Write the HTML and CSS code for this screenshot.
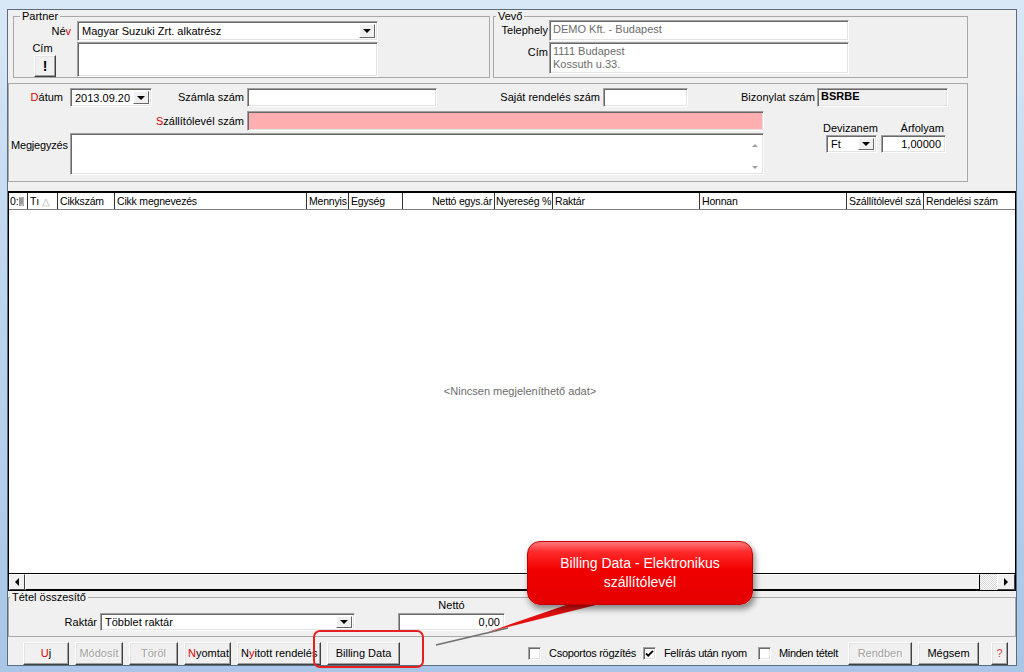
FILE: index.html
```html
<!DOCTYPE html>
<html lang="hu">
<head>
  <meta charset="UTF-8" />
  <title>Szállítólevél</title>
  <link rel="stylesheet" href="styles.css">
</head>
<body>
  <div class="window">
    <div class="client">

      <!-- Partner / Vevő -->
      <div class="top">
        <fieldset class="group partner">
          <legend>Partner</legend>
          <div class="pair-grid">
            <span class="lbl">Né<em>v</em></span>
            <div class="combo"><span class="val">Magyar Suzuki Zrt. alkatrész</span><span class="drop"></span></div>
            <div class="lbl-stack">
              <span class="lbl">Cím</span>
              <button class="btn bang">!</button>
            </div>
            <div class="edit"></div>
          </div>
        </fieldset>

        <fieldset class="group vevo">
          <legend>Vevő</legend>
          <div class="pair-grid">
            <span class="lbl">Telephely</span>
            <div class="edit ro">DEMO Kft. - Budapest</div>
            <span class="lbl lbl-top">Cím</span>
            <div class="edit ro multi">1111 Budapest<br>Kossuth u.33.</div>
          </div>
        </fieldset>
      </div>

      <!-- Bizonylat adatok -->
      <div class="group doc">
        <div class="row row1">
          <span class="lbl w-datum"><em>D</em>átum</span>
          <div class="combo w-date"><span class="val">2013.09.20</span><span class="drop"></span></div>
          <span class="lbl w-szamla">Számla szám</span>
          <div class="edit w-szamla-in"></div>
          <span class="lbl w-sajat">Saját rendelés szám</span>
          <div class="edit w-sajat-in"></div>
          <span class="lbl w-biz">Bizonylat szám</span>
          <div class="edit disabled w-biz-in">BSRBE</div>
        </div>

        <div class="lower">
          <div class="lower-left">
            <div class="row row2">
              <span class="lbl w-szall"><em>S</em>zállítólevél szám</span>
              <div class="edit required w-szall-in"></div>
            </div>
            <div class="row row3">
              <span class="lbl-left">Megjegyzés</span>
              <div class="edit memo">
                <span class="memo-arrows"><i class="tri-up"></i><i class="tri-down"></i></span>
              </div>
            </div>
          </div>

          <div class="currency">
            <span class="cur-lbl">Devizanem</span>
            <span class="cur-lbl right">Árfolyam</span>
            <div class="combo"><span class="val">Ft</span><span class="drop"></span></div>
            <div class="edit num">1,00000</div>
          </div>
        </div>
      </div>

      <!-- Tételek -->
      <div class="grid">
        <div class="grid-head">
          <div class="col c0">0:<svg width="5" height="9" viewBox="0 0 5 9"><path d="M0 0h5v9H0z M1 1v7 M3 1v7 M1 2h3 M1 4h3 M1 6h3" fill="none" stroke="#777" stroke-width="1"/></svg></div>
          <div class="col c1">Tı <span class="sort">△</span></div>
          <div class="col c2">Cikkszám</div>
          <div class="col c3">Cikk megnevezés</div>
          <div class="col c4">Mennyis</div>
          <div class="col c5">Egység</div>
          <div class="col c6 right">Nettó egys.ár</div>
          <div class="col c7">Nyereség %</div>
          <div class="col c8">Raktár</div>
          <div class="col c9">Honnan</div>
          <div class="col c10">Szállítólevél szá</div>
          <div class="col c11">Rendelési szám</div>
        </div>
        <div class="grid-body">
          <span class="empty">&lt;Nincsen megjeleníthető adat&gt;</span>
        </div>
        <div class="hscroll">
          <span class="sb-btn"><i class="tri-left"></i></span>
          <span class="sb-thumb"></span>
          <span class="sb-track"></span>
          <span class="sb-btn"><i class="tri-right"></i></span>
        </div>
      </div>

      <!-- Összesítő -->
      <fieldset class="group summary">
        <legend>Tétel összesítő</legend>
        <div class="sum-row">
          <span class="lbl w-raktar">Raktár</span>
          <div class="combo w-raktar-in"><span class="val">Többlet raktár</span><span class="drop"></span></div>
          <div class="netto">
            <span class="netto-lbl">Nettó</span>
            <div class="edit num">0,00</div>
          </div>
        </div>
      </fieldset>

      <!-- Gombok -->
      <div class="btn-row">
        <div class="btn-group">
          <button class="btn w-uj"><em>U</em>j</button>
          <button class="btn off w-mod">Módosít</button>
          <button class="btn off w-torol">Töröl</button>
          <button class="btn w-nyomtat"><em>N</em>yomtat</button>
          <button class="btn w-nyitott">N<em>y</em>itott rendelés</button>
          <button class="btn w-billing">Billing Data</button>
        </div>
        <div class="btn-group right">
          <label class="check c-csop"><span class="box"></span>Csoportos rögzítés</label>
          <label class="check c-feliras"><span class="box"><svg width="9" height="9" viewBox="0 0 9 9"><path d="M1 4.5l2.2 2.2L8 1.8" fill="none" stroke="#000" stroke-width="1.8"/></svg></span>Felírás után nyom</label>
          <label class="check c-minden"><span class="box"></span>Minden tételt</label>
          <button class="btn off w-rendben">Rendben</button>
          <button class="btn w-megsem">Mégsem</button>
          <button class="btn help">?</button>
        </div>
      </div>
    </div>

    <!-- Kiemelés -->
    <div class="highlight"></div>
    <svg class="tail" width="1024" height="672" viewBox="0 0 1024 672">
      <line x1="436" y1="645" x2="508" y2="628" stroke="#6f6f6f" stroke-width="1.4"/>
      <polygon points="488,632 572,603 604,603" fill="#e51010"/>
    </svg>
    <div class="callout">Billing Data - Elektronikus<br>szállítólevél</div>
  </div>
</body>
</html>
```

FILE: styles.css
```css
:root {
  --face: #f0f0f0;
  --key: #e00000;
  --group: #a8a8a8;
}

* {
  box-sizing: border-box;
}

body {
  margin: 0;
  font-family: "Liberation Sans", Arial, sans-serif;
  font-size: 11px;
  line-height: 13px;
  color: #000;
}

em {
  font-style: normal;
  color: var(--key);
}

/* ----------- WINDOW FRAME ----------- */
.window {
  position: relative;
  width: 1024px;
  height: 672px;
  padding: 9px 7px 6px 7px;
  background: linear-gradient(180deg, #d9e8f7 0%, #bcd4ee 45%, #a9c6e7 100%);
  overflow: hidden;
}

.client {
  height: 100%;
  background: var(--face);
  border: 1px solid #5d6d80;
  display: flex;
  flex-direction: column;
}

/* ----------- COMMON CONTROLS ----------- */
.group {
  margin: 0;
  padding: 0;
  min-width: 0;
  border: 1px solid var(--group);
}

legend {
  padding: 0 2px;
  line-height: 13px;
}

.lbl {
  text-align: right;
  padding-right: 3px;
  white-space: nowrap;
  align-self: center;
}

.edit {
  background: #fff;
  border: 1px solid;
  border-color: #a0a0a0 #fff #fff #a0a0a0;
  box-shadow: inset 1px 1px 0 #696969, inset -1px -1px 0 #e3e3e3;
  padding: 2px 3px;
  white-space: nowrap;
  overflow: hidden;
}

.edit.ro {
  color: #6d6d6d;
}

.edit.disabled {
  background: var(--face);
  font-weight: bold;
  padding-top: 1px;
}

.edit.required {
  background: #ffafaf;
}

.edit.num {
  text-align: right;
  padding-right: 4px;
  line-height: 12px;
}

.combo {
  display: flex;
  height: 20px;
  background: #fff;
  border: 1px solid;
  border-color: #a0a0a0 #fff #fff #a0a0a0;
  box-shadow: inset 1px 1px 0 #696969, inset -1px -1px 0 #e3e3e3;
  padding: 2px;
}

.combo .val {
  flex: 1;
  padding-left: 2px;
  line-height: 14px;
  white-space: nowrap;
  overflow: hidden;
}

.drop {
  width: 16px;
  background: var(--face);
  border: 1px solid;
  border-color: #fff #696969 #696969 #fff;
  display: flex;
  align-items: center;
  justify-content: center;
}

.drop::after {
  content: "";
  border-left: 4px solid transparent;
  border-right: 4px solid transparent;
  border-top: 4px solid #000;
}

.btn {
  font: inherit;
  color: #000;
  height: 23px;
  padding: 0 3px;
  background: var(--face);
  border: 1px solid;
  border-color: #fff #404040 #404040 #fff;
  box-shadow: inset -1px -1px 0 #a0a0a0, inset 1px 1px 0 #e3e3e3;
  white-space: nowrap;
  overflow: hidden;
}

.btn.off {
  color: #a0a0a0;
  text-shadow: 1px 1px 0 #fff;
}

/* ----------- PARTNER / VEVŐ ----------- */
.top {
  display: flex;
  gap: 3px;
  padding-left: 5px;
}

.partner {
  width: 477px;
}

.partner legend {
  margin-left: 6px;
}

.vevo {
  width: 475px;
}

.vevo legend {
  margin-left: 2px;
}

.pair-grid {
  display: grid;
  row-gap: 1px;
}

.partner .pair-grid {
  grid-template-columns: 63px 301px;
  grid-template-rows: 20px 35px;
  margin-top: -2px;
}

.partner .lbl {
  padding-right: 6px;
}

.lbl-stack {
  display: flex;
  flex-direction: column;
  align-items: flex-end;
}

.lbl-stack .lbl {
  padding-top: 0;
}

.bang {
  align-self: flex-start;
  margin: auto 0 0 20px;
  width: 22px;
  font-weight: bold;
  font-size: 14px;
  padding: 0;
}

.vevo .pair-grid {
  grid-template-columns: 55px 300px;
  grid-template-rows: 21px 32px;
  margin-top: -3px;
  padding-bottom: 3px;
}

.vevo .lbl {
  padding-right: 1px;
}

.vevo .lbl-top {
  align-self: start;
  padding-top: 4px;
}

.edit.multi {
  padding-top: 2px;
  line-height: 13px;
}

/* ----------- BIZONYLAT ----------- */
.doc {
  margin-top: 5px;
  width: 960px;
  padding: 4px 0 6px;
}

.row {
  display: flex;
}

.row1 {
  height: 19px;
}

.w-datum { width: 61px; padding-right: 7px; }
.w-date { width: 82px; height: 19px; }
.w-szamla { width: 95px; }
.w-szamla-in { width: 190px; }
.w-sajat { width: 166px; }
.w-sajat-in { width: 85px; }
.w-biz { width: 129px; padding-right: 2px; }
.w-biz-in { width: 131px; }

.lower {
  display: flex;
  margin-top: 4px;
}

.row2 {
  height: 20px;
}

.w-szall { width: 238px; }
.w-szall-in { width: 517px; }

.row3 {
  margin-top: 2px;
  height: 42px;
}

.lbl-left {
  width: 61px;
  padding: 6px 0 0 2px;
  letter-spacing: -0.2px;
}

.memo {
  width: 694px;
  display: flex;
  justify-content: flex-end;
  padding: 0;
}

.memo-arrows {
  width: 16px;
  display: flex;
  flex-direction: column;
  align-items: center;
  justify-content: space-between;
  padding: 10px 0 5px;
}

.tri-up,
.tri-down {
  border-left: 3px solid transparent;
  border-right: 3px solid transparent;
}

.tri-up { border-bottom: 3px solid #a0a0a0; }
.tri-down { border-top: 3px solid #a0a0a0; }

.currency {
  display: grid;
  grid-template-columns: 51px 65px;
  grid-template-rows: 13px 18px;
  column-gap: 4px;
  margin: 11px 0 0 62px;
}

.cur-lbl {
  white-space: nowrap;
  margin-left: -3px;
}

.cur-lbl.right {
  text-align: right;
  margin-left: 0;
  padding-right: 2px;
}

.currency .combo {
  height: 18px;
}

.currency .combo .val {
  line-height: 12px;
}

/* ----------- GRID ----------- */
.grid {
  margin-top: 9px;
  flex: 1;
  display: flex;
  flex-direction: column;
  border: 1px solid #000;
  border-top-width: 2px;
  background: #fff;
}

.grid-head {
  display: flex;
  height: 17px;
  border-bottom: 1px solid #808080;
  font-size: 10.5px;
  letter-spacing: -0.2px;
}

.col {
  flex: none;
  border-right: 1px solid #333;
  padding-left: 2px;
  line-height: 16px;
  white-space: nowrap;
  overflow: hidden;
}

.col.right {
  text-align: right;
  padding: 0 2px 0 0;
}

.c0 { width: 19px; padding-left: 1px; display: flex; align-items: center; gap: 1px; }
.c1 { width: 30px; }
.c2 { width: 57px; }
.c3 { width: 192px; }
.c4 { width: 42px; }
.c5 { width: 54px; }
.c6 { width: 92px; }
.c7 { width: 58px; padding-left: 1px; }
.c8 { width: 147px; }
.c9 { width: 147px; }
.c10 { width: 77px; }
.c11 { width: 79px; border-right: 0; }

.sort {
  color: #a8a8a8;
  font-size: 10px;
}

.grid-body {
  flex: 1;
  display: flex;
  align-items: center;
  justify-content: center;
  padding-left: 16px;
}

.empty {
  color: #6d6d6d;
}

.hscroll {
  display: flex;
  height: 17px;
  border-top: 1px solid #000;
}

.sb-btn {
  width: 16px;
  background: var(--face);
  border: 1px solid;
  border-color: #fff #404040 #404040 #fff;
  display: flex;
  align-items: center;
  justify-content: center;
}

.sb-btn:last-child {
  width: 18px;
}

.tri-left,
.tri-right {
  border-top: 4px solid transparent;
  border-bottom: 4px solid transparent;
}

.tri-left { border-right: 4px solid #000; }
.tri-right { border-left: 4px solid #000; }

.sb-thumb {
  flex: 1;
  background: var(--face);
  border: 1px solid;
  border-color: #fff #000 #000 #fff;
}

.sb-track {
  width: 17px;
  background: repeating-conic-gradient(#fff 0 25%, #d8d8d8 0 50%) 0 0 / 2px 2px;
}

/* ----------- ÖSSZESÍTŐ ----------- */
.summary legend {
  margin-left: 1px;
}

.sum-row {
  display: flex;
  align-items: flex-end;
  margin-top: -5px;
  padding-bottom: 5px;
}

.w-raktar { width: 91px; align-self: auto; padding-bottom: 2px; }
.w-raktar-in { width: 255px; height: 18px; }
.w-raktar-in .val { line-height: 12px; }

.netto {
  display: flex;
  flex-direction: column;
  width: 107px;
  margin-left: 43px;
}

.netto-lbl {
  text-align: center;
  margin-bottom: 1px;
}

.netto .edit {
  height: 18px;
}

/* ----------- BUTTONS ----------- */
.btn-row {
  display: flex;
  align-items: center;
  padding: 4px 8px 0 15px;
  height: 28px;
}

.btn-group {
  display: flex;
  align-items: center;
  gap: 6px;
}

.btn-group.right {
  margin-left: auto;
  gap: 0;
}

.w-uj { width: 46px; }
.w-mod { width: 48px; }
.w-torol { width: 49px; }
.w-nyomtat { width: 47px; }
.w-nyitott { width: 84px; }
.w-billing { width: 73px; }

.check {
  display: flex;
  align-items: center;
  gap: 8px;
  white-space: nowrap;
  letter-spacing: -0.3px;
}

.c-csop { margin-right: 7px; }
.c-feliras { margin-right: 11px; }
.c-minden { margin-right: 10px; }

.box {
  width: 13px;
  height: 13px;
  background: #fff;
  border: 1px solid;
  border-color: #a0a0a0 #fff #fff #a0a0a0;
  box-shadow: inset 1px 1px 0 #696969, inset -1px -1px 0 #e3e3e3;
  display: flex;
  align-items: center;
  justify-content: center;
}

.w-rendben { width: 64px; }
.w-megsem { width: 61px; margin-left: 6px; }

.help {
  width: 17px;
  margin-left: 12px;
  color: #d84040;
  padding: 0;
}

/* ----------- ANNOTATION ----------- */
.highlight {
  position: absolute;
  left: 313px;
  top: 630px;
  width: 111px;
  height: 38px;
  border: 2px solid #e42020;
  border-radius: 7px;
}

.tail {
  position: absolute;
  left: 0;
  top: 0;
  pointer-events: none;
}

.callout {
  position: absolute;
  left: 527px;
  top: 541px;
  width: 226px;
  height: 64px;
  padding-top: 12px;
  border-radius: 13px;
  border: 1px solid #c00000;
  background: linear-gradient(180deg, #ff7a7a 0%, #ff2a2a 16%, #f20000 45%, #e40000 100%);
  box-shadow: 2px 4px 6px rgba(0, 0, 0, 0.45);
  color: #fff;
  font-size: 14px;
  line-height: 19px;
  text-align: center;
}
```
